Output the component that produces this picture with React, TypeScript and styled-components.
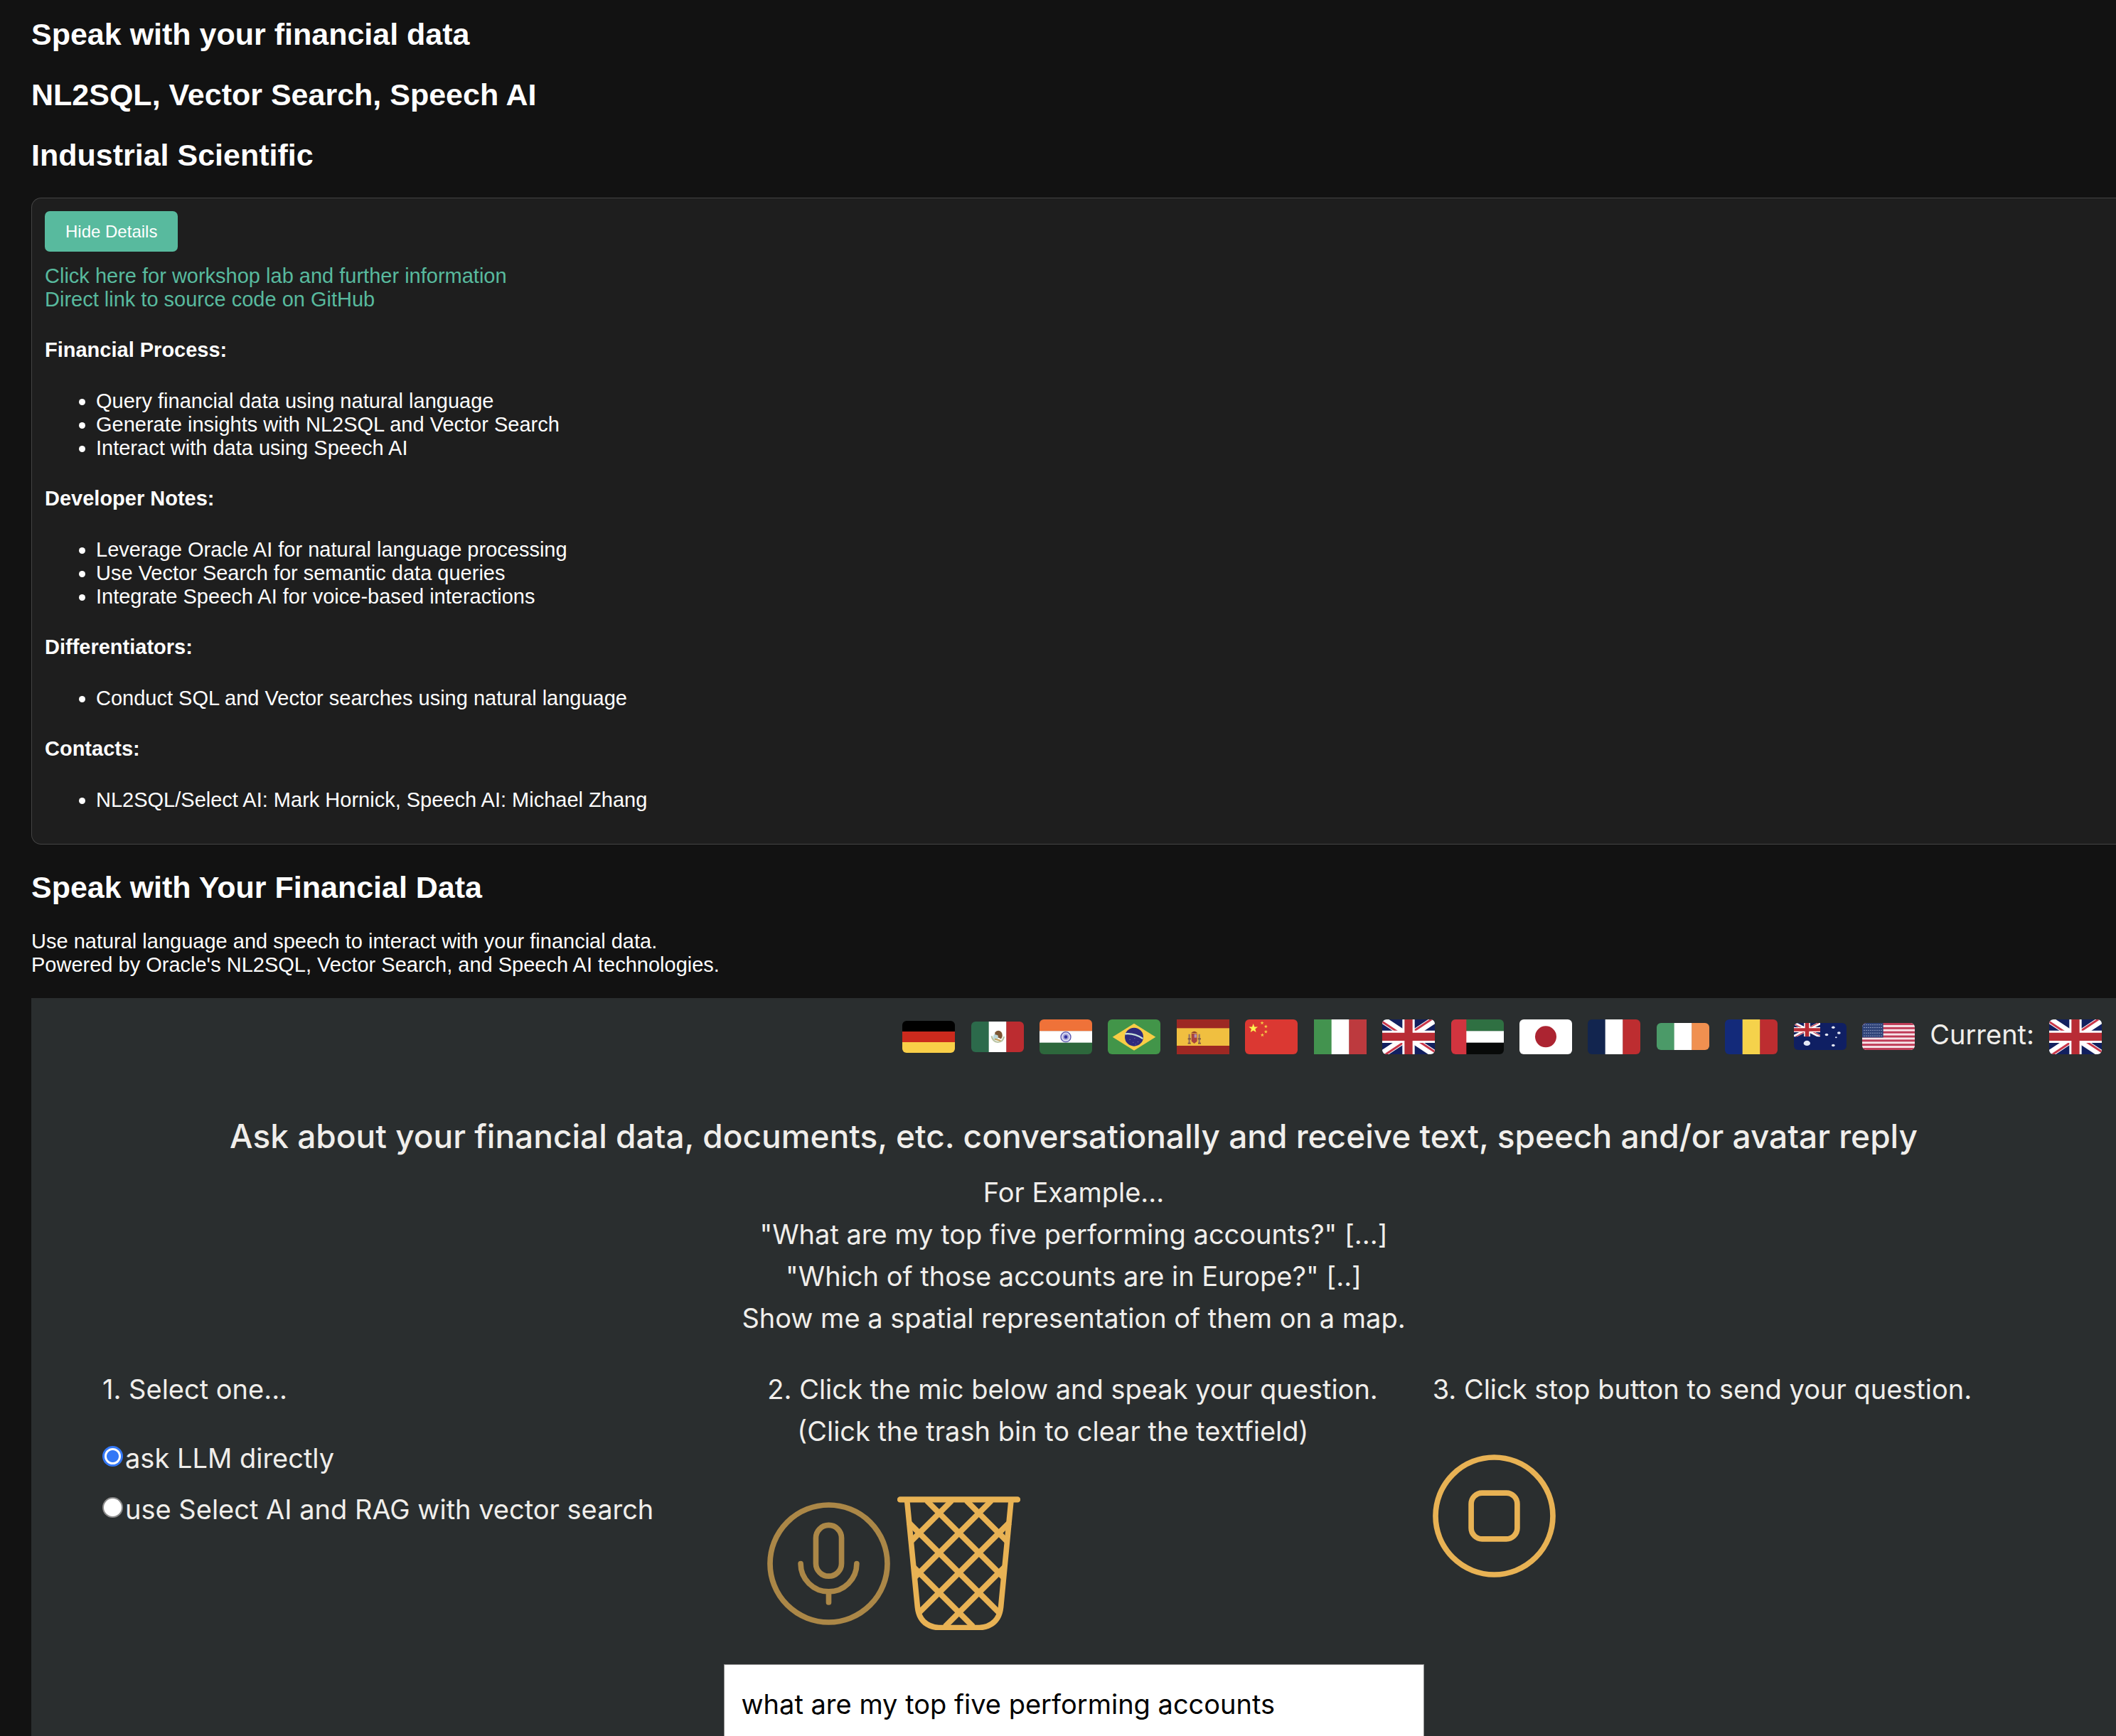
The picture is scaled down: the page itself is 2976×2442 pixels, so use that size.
import React, { useState } from "react";
import styled, { createGlobalStyle, css } from "styled-components";

const sans = `"Liberation Sans", Arial, sans-serif`;
const ui = `Inter, "Noto Sans", sans-serif`;
const color = {
  page: "#121212",
  card: "#1e1e1e",
  line: "#444444",
  accent: "#58ba9e",
  text: "#ffffff",
  panel: "#2a2e2f",
  panelText: "#f0eeeb",
  gold: "#e8b254",
  goldDim: "#ab8747",
};

const Global = createGlobalStyle`
  *, *::before, *::after { box-sizing: border-box; }
  body { margin: 0; background: ${color.page}; }
`;

const Page = styled.main`
  display: flex;
  flex-direction: column;
  min-height: 100vh;
  padding: 23px 0 0 44px;
  color: ${color.text};
  font: 29px/33px ${sans};
`;

const Heading = styled.h2`
  margin: 0 0 35px;
  font-size: 43px;
  line-height: 50px;
  font-weight: 700;
`;

const Card = styled.section`
  margin-bottom: 35px;
  padding: 18px;
  border: 1px solid ${color.line};
  border-right: 0;
  border-radius: 14px 0 0 14px;
  background: ${color.card};
`;

const ToggleButton = styled.button`
  display: block;
  margin: 0 0 18px;
  padding: 14px 29px;
  border: 0;
  border-radius: 7px;
  background: ${color.accent};
  color: #fff;
  font: 24px/29px ${sans};
  cursor: pointer;
`;

const Links = styled.div`
  display: flex;
  flex-direction: column;
  align-items: flex-start;
`;

const TextLink = styled.a`
  color: ${color.accent};
  text-decoration: none;
`;

const Subheading = styled.h4`
  margin: 38px 0 39px;
  font-size: 29px;
  line-height: 33px;
`;

const Bullets = styled.ul`
  margin: 0;
  padding-left: 72px;

  &:last-child {
    margin-bottom: 27px;
  }
`;

const Intro = styled.p`
  margin: 0 0 30px;
`;

const Panel = styled.section`
  flex: 1;
  display: flex;
  flex-direction: column;
  padding-top: 29px;
  background: ${color.panel};
  color: ${color.panelText};
  font: 38px/59px ${ui};
`;

const LanguageBar = styled.div`
  display: flex;
  justify-content: flex-end;
  align-items: flex-start;
  gap: 21px;
  margin-bottom: 85px;
  padding-right: 20px;
`;

const FlagList = styled.nav`
  display: flex;
  justify-content: space-between;
  width: 1424px;
`;

const flagCell = css`
  display: flex;
  align-items: center;
  justify-content: center;
  width: 74px;
  height: 50px;
`;

const FlagButton = styled.button`
  ${flagCell}
  padding: 0;
  border: 0;
  background: none;
  cursor: pointer;
`;

const FlagFrame = styled.span`
  ${flagCell}
`;

const FlagSvg = styled.svg<{ $h: number; $square?: boolean }>`
  display: block;
  width: 100%;
  height: ${(p) => p.$h}px;
  border-radius: ${(p) => (p.$square ? 0 : 6)}px;
  overflow: hidden;
`;

const CurrentLabel = styled.span`
  line-height: 45px;
`;

const PanelTitle = styled.h3`
  margin: 0 0 20px;
  font-size: 46px;
  line-height: 60px;
  font-weight: 500;
  text-align: center;
`;

const Examples = styled.p`
  margin: 0 0 41px;
  text-align: center;
`;

const Steps = styled.div`
  display: grid;
  grid-template-columns: repeat(3, 1fr);
  margin-bottom: 48px;
  padding: 0 26px 0 100px;
`;

const StepText = styled.p<{ $gap: number }>`
  margin: 0 0 ${(p) => p.$gap}px;
`;

const Indented = styled.span`
  display: block;
  padding-left: 42px;
`;

const Choices = styled.div`
  display: flex;
  flex-direction: column;
  align-items: flex-start;
  gap: 13px;
`;

const Choice = styled.label`
  display: flex;
  align-items: flex-start;
  gap: 3px;
  cursor: pointer;
`;

const Radio = styled.input`
  appearance: none;
  width: 29px;
  height: 29px;
  margin: 12px 0 0;
  border: 2px solid #8b8b8b;
  border-radius: 50%;
  background: #fff;

  &:checked {
    border: 3px solid #3478f6;
    background: radial-gradient(circle, #3478f6 8px, #fff 9px);
  }
`;

const Actions = styled.div`
  display: flex;
  align-items: center;
  gap: 10px;
`;

const IconButton = styled.button<{ $dim?: boolean }>`
  padding: 0;
  border: 0;
  background: none;
  color: ${(p) => (p.$dim ? color.goldDim : color.gold)};
  cursor: pointer;

  svg {
    display: block;
    width: 173px;
    fill: none;
    stroke: currentColor;
    stroke-width: 23;
    stroke-linecap: round;
  }
`;

const Question = styled.textarea`
  flex: 1;
  align-self: center;
  width: 985px;
  max-width: 100%;
  min-height: 90px;
  padding: 26px 24px 0;
  border: 1px solid #8f8f8f;
  border-bottom: 0;
  border-radius: 0;
  background: #fff;
  color: #000;
  font: 38px/59px ${ui};
  resize: none;
  overflow: hidden;
  outline: none;
`;

const details = [
  {
    title: "Financial Process:",
    items: [
      "Query financial data using natural language",
      "Generate insights with NL2SQL and Vector Search",
      "Interact with data using Speech AI",
    ],
  },
  {
    title: "Developer Notes:",
    items: [
      "Leverage Oracle AI for natural language processing",
      "Use Vector Search for semantic data queries",
      "Integrate Speech AI for voice-based interactions",
    ],
  },
  { title: "Differentiators:", items: ["Conduct SQL and Vector searches using natural language"] },
  { title: "Contacts:", items: ["NL2SQL/Select AI: Mark Hornick, Speech AI: Michael Zhang"] },
];

/* Flag artwork: every flag is drawn on a 222 x 147 field. */

const Vertical = ({ c }: { c: string[] }) => (
  <>
    {c.map((fill, i) => (
      <rect key={i} x={i * 74} width="75" height="147" fill={fill} />
    ))}
  </>
);

const Horizontal = ({ c }: { c: string[] }) => (
  <>
    {c.map((fill, i) => (
      <rect key={i} y={i * 49} width="222" height="50" fill={fill} />
    ))}
  </>
);

const star = (cx: number, cy: number, r: number) =>
  Array.from({ length: 10 }, (_, i) => {
    const a = (Math.PI / 5) * i - Math.PI / 2;
    const d = i % 2 ? r * 0.42 : r;
    return `${cx + d * Math.cos(a)},${cy + d * Math.sin(a)}`;
  }).join(" ");

const UnionJack = () => (
  <>
    <rect width="222" height="147" fill="#12205f" />
    <path d="M0 0 222 147M222 0 0 147" stroke="#fff" strokeWidth="31" />
    <path d="M-6 6 111 83M216 -6 111 64M228 141 111 64M6 153 111 83" stroke="#c8374a" strokeWidth="9" />
    <path d="M111 0V147M0 73H222" stroke="#fff" strokeWidth="52" />
    <path d="M111 0V147M0 73H222" stroke="#b82c35" strokeWidth="34" />
  </>
);

type FlagDef = { name: string; h: number; square?: boolean; art: React.ReactNode };

const britain: FlagDef = { name: "United Kingdom", h: 49, art: <UnionJack /> };

const flags: FlagDef[] = [
  { name: "Germany", h: 45, art: <Horizontal c={["#000", "#cb2a1d", "#f9cf48"]} /> },
  {
    name: "Mexico",
    h: 43,
    art: (
      <>
        <Vertical c={["#2c6a4b", "#fff", "#bc2c30"]} />
        <path d="M86 70Q90 98 112 99Q134 98 138 72" fill="none" stroke="#b9c4a4" strokeWidth="7" />
        <ellipse cx="103" cy="75" rx="10" ry="15" fill="#bcd9dc" />
        <path d="M100 52Q114 36 127 50Q136 66 126 84L112 76Q118 64 100 62Z" fill="#7c5634" />
        <path d="M99 84 124 92" stroke="#c4a35c" strokeWidth="7" />
      </>
    ),
  },
  {
    name: "India",
    h: 49,
    art: (
      <>
        <Horizontal c={["#ef7239", "#fff", "#2d673c"]} />
        <circle cx="111" cy="74" r="21" fill="#d9d9f0" stroke="#5a57b0" strokeWidth="4" />
        <circle cx="111" cy="74" r="13" fill="#a5a4d8" />
        <circle cx="111" cy="74" r="7" fill="#3431a0" />
      </>
    ),
  },
  {
    name: "Brazil",
    h: 49,
    art: (
      <>
        <rect width="222" height="147" fill="#429549" />
        <path d="M20 74 111 17 202 74 111 131Z" fill="#f8cd46" />
        <circle cx="111" cy="74" r="39" fill="#2e2a7d" />
        <path d="M73 61Q113 57 148 81" fill="none" stroke="#c6e0dc" strokeWidth="7" />
        <path d="M92 85h3M112 80h3M106 97h3M126 95h3M116 105h3" stroke="#7f7bb4" strokeWidth="3" />
      </>
    ),
  },
  {
    name: "Spain",
    h: 49,
    square: true,
    art: (
      <>
        <rect width="222" height="147" fill="#9d2823" />
        <rect y="37" width="222" height="74" fill="#f0bf40" />
        <path d="M62 60h24v32l-12 10-12-10Z" fill="#a8443f" />
        <path d="M60 58q14-16 28 0Z" fill="#8f3f2c" />
        <path d="M74 62h10v15h-10Z" fill="#b58fb0" />
        <path d="M53 62V99M95 62V99" stroke="#9a7763" strokeWidth="7" />
        <path d="M47 82h13M89 82h13M47 101h12M90 101h12" stroke="#7c4f45" strokeWidth="5" />
      </>
    ),
  },
  {
    name: "China",
    h: 49,
    art: (
      <>
        <rect width="222" height="147" fill="#db3832" />
        <polygon points={star(35, 38, 20)} fill="#fdf150" />
        {[[72, 15], [88, 30], [88, 52], [73, 66]].map(([x, y]) => (
          <polygon key={y} points={star(x, y, 8)} fill="#f6c944" />
        ))}
      </>
    ),
  },
  { name: "Italy", h: 49, square: true, art: <Vertical c={["#43934f", "#fff", "#bd3a3e"]} /> },
  britain,
  {
    name: "United Arab Emirates",
    h: 49,
    art: (
      <>
        <Horizontal c={["#2f7042", "#fff", "#080a09"]} />
        <rect width="64" height="147" fill="#d2343f" />
      </>
    ),
  },
  {
    name: "Japan",
    h: 49,
    art: (
      <>
        <rect width="222" height="147" fill="#fff" />
        <circle cx="111" cy="73" r="45" fill="#ac2431" />
      </>
    ),
  },
  { name: "France", h: 49, art: <Vertical c={["#12254f", "#fff", "#bd2d30"]} /> },
  { name: "Ireland", h: 38, art: <Vertical c={["#4b9a68", "#fff", "#f09050"]} /> },
  { name: "Romania", h: 49, art: <Vertical c={["#132a7a", "#f5d24b", "#bd2d30"]} /> },
  {
    name: "Australia",
    h: 38,
    art: (
      <>
        <rect width="222" height="147" fill="#0f1f63" />
        <svg width="111" height="74" viewBox="0 0 222 147" preserveAspectRatio="none">
          <UnionJack />
        </svg>
        {[[55, 110, 14], [166, 24, 7], [138, 64, 7], [190, 54, 7], [178, 78, 4], [166, 122, 7]].map(([x, y, r]) => (
          <circle key={`${x}-${y}`} cx={x} cy={y} r={r} fill="#e4e8f6" />
        ))}
      </>
    ),
  },
  {
    name: "United States",
    h: 38,
    art: (
      <>
        <rect width="222" height="147" fill="#f6e4e8" />
        {Array.from({ length: 7 }, (_, i) => (
          <rect key={i} y={i * 22.6} width="222" height="11.3" fill="#bf3a56" />
        ))}
        <rect width="89" height="79" fill="#2f4378" />
        {Array.from({ length: 45 }, (_, i) => (
          <circle key={i} cx={9 + (i % 9) * 9} cy={10 + Math.floor(i / 9) * 15} r="2.5" fill="#a9b5d4" />
        ))}
      </>
    ),
  },
];

const FlagArt = ({ flag }: { flag: FlagDef }) => (
  <FlagSvg $h={flag.h} $square={flag.square} viewBox="0 0 222 147" preserveAspectRatio="none" aria-hidden="true">
    {flag.art}
  </FlagSvg>
);

const MicIcon = () => (
  <svg viewBox="0 0 518 518" aria-hidden="true">
    <circle cx="259" cy="259" r="247" />
    <rect x="205" y="97" width="108" height="215" rx="54" />
    <path d="M141 259a118 118 0 0 0 236 0M259 377v45" />
  </svg>
);

const BinIcon = () => (
  <svg viewBox="606 44 518 564" aria-hidden="true">
    <path d="M618 57H1112" strokeWidth="25" />
    <path d="M647 62 691 510Q700 590 780 597H952Q1033 590 1042 510L1085 62" />
    <g strokeLinecap="butt" strokeWidth="24">
      <path d="M653 153 1037 536M730 62 1052 384M897 62 1071 236M673 340 925 592" />
      <path d="M1079 153 695 536M1002 62 680 384M835 62 661 236M1059 340 807 592" />
    </g>
  </svg>
);

const StopIcon = () => (
  <svg viewBox="0 0 518 518" aria-hidden="true">
    <circle cx="259" cy="259" r="247" />
    <rect x="162" y="162" width="194" height="194" rx="46" />
  </svg>
);

export default function App() {
  const [open, setOpen] = useState(true);
  const [mode, setMode] = useState("llm");
  const [current, setCurrent] = useState(britain);
  const [question, setQuestion] = useState("what are my top five performing accounts");

  return (
    <Page>
      <Global />
      <Heading>Speak with your financial data</Heading>
      <Heading>NL2SQL, Vector Search, Speech AI</Heading>
      <Heading>Industrial Scientific</Heading>

      <Card>
        <ToggleButton type="button" onClick={() => setOpen(!open)}>
          {open ? "Hide Details" : "Show Details"}
        </ToggleButton>
        {open && (
          <div>
            <Links>
              <TextLink href="#workshop">Click here for workshop lab and further information</TextLink>
              <TextLink href="#source">Direct link to source code on GitHub</TextLink>
            </Links>
            {details.map((group) => (
              <React.Fragment key={group.title}>
                <Subheading>{group.title}</Subheading>
                <Bullets>
                  {group.items.map((item) => (
                    <li key={item}>{item}</li>
                  ))}
                </Bullets>
              </React.Fragment>
            ))}
          </div>
        )}
      </Card>

      <Heading>Speak with Your Financial Data</Heading>
      <Intro>
        Use natural language and speech to interact with your financial data.
        <br />
        Powered by Oracle's NL2SQL, Vector Search, and Speech AI technologies.
      </Intro>

      <Panel>
        <LanguageBar>
          <FlagList aria-label="Language">
            {flags.map((flag) => (
              <FlagButton key={flag.name} type="button" aria-label={flag.name} onClick={() => setCurrent(flag)}>
                <FlagArt flag={flag} />
              </FlagButton>
            ))}
          </FlagList>
          <CurrentLabel>Current:</CurrentLabel>
          <FlagFrame role="img" aria-label={current.name}>
            <FlagArt flag={current} />
          </FlagFrame>
        </LanguageBar>

        <PanelTitle>
          Ask about your financial data, documents, etc. conversationally and receive text, speech and/or avatar reply
        </PanelTitle>
        <Examples>
          For Example...
          <br />
          "What are my top five performing accounts?" [...]
          <br />
          "Which of those accounts are in Europe?" [..]
          <br />
          Show me a spatial representation of them on a map.
        </Examples>

        <Steps>
          <div>
            <StepText $gap={38}>1. Select one...</StepText>
            <Choices>
              <Choice>
                <Radio type="radio" name="mode" checked={mode === "llm"} onChange={() => setMode("llm")} />
                ask LLM directly
              </Choice>
              <Choice>
                <Radio type="radio" name="mode" checked={mode === "rag"} onChange={() => setMode("rag")} />
                use Select AI and RAG with vector search
              </Choice>
            </Choices>
          </div>
          <div>
            <StepText $gap={62}>
              2. Click the mic below and speak your question.
              <Indented>(Click the trash bin to clear the textfield)</Indented>
            </StepText>
            <Actions>
              <IconButton type="button" $dim aria-label="Record">
                <MicIcon />
              </IconButton>
              <IconButton type="button" aria-label="Clear text" onClick={() => setQuestion("")}>
                <BinIcon />
              </IconButton>
            </Actions>
          </div>
          <div>
            <StepText $gap={62}>3. Click stop button to send your question.</StepText>
            <IconButton type="button" aria-label="Stop">
              <StopIcon />
            </IconButton>
          </div>
        </Steps>

        <Question
          aria-label="Question"
          rows={1}
          value={question}
          onChange={(e) => setQuestion(e.target.value)}
        />
      </Panel>
    </Page>
  );
}
